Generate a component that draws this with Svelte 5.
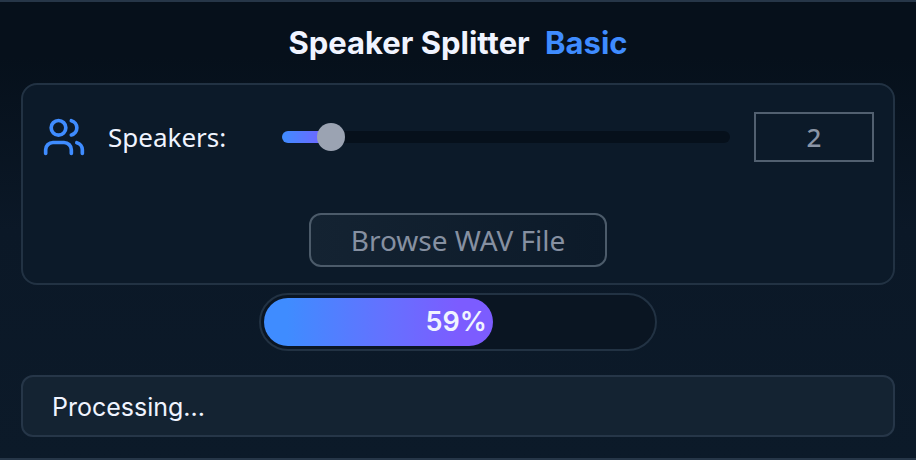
<script lang="ts">
  const minSpeakers = 1;
  const maxSpeakers = 13;

  let speakers = $state(2);
  let progress = $state(59);
  let status = $state('Processing...');
  let busy = $state(true);

  // Share of the track left of the thumb
  const filled = $derived(((speakers - minSpeakers) / (maxSpeakers - minSpeakers)) * 100);
</script>

<main class="app">
  <h1>Speaker Splitter <span class="edition">Basic</span></h1>

  <section class="panel">
    <div class="speakers">
      <svg class="icon" viewBox="0 0 24 24" aria-hidden="true">
        <path d="M16 21v-2a4 4 0 0 0-4-4H6a4 4 0 0 0-4 4v2" />
        <circle cx="9" cy="7" r="4" />
        <path d="M22 21v-2a4 4 0 0 0-3-3.87" />
        <path d="M16 3.13a4 4 0 0 1 0 7.75" />
      </svg>
      <label for="speakers">Speakers:</label>
      <input
        id="speakers"
        class="slider"
        type="range"
        min={minSpeakers}
        max={maxSpeakers}
        bind:value={speakers}
        disabled={busy}
        style="--filled: {filled}%"
      />
      <input
        class="count"
        type="text"
        inputmode="numeric"
        aria-label="Number of speakers"
        bind:value={speakers}
        disabled={busy}
      />
    </div>
    <button class="browse" type="button" disabled={busy}>Browse WAV File</button>
  </section>

  <div
    class="progress"
    role="progressbar"
    aria-label="Progress"
    aria-valuemin="0"
    aria-valuemax="100"
    aria-valuenow={progress}
  >
    <div class="bar" style="width: {progress}%">{progress}%</div>
  </div>

  <p class="status" role="status">{status}</p>
</main>

<style>
  :global(body) {
    margin: 0;
    background: #0c1a29;
  }

  .app {
    box-sizing: border-box;
    min-height: 100vh;
    padding: 21px;
    display: flex;
    flex-direction: column;
    border: solid #263648;
    border-width: 2px 0;
    background: linear-gradient(#06101b 0%, #06101b 12%, #0b1827 50%, #0c1a29 100%);
    color: #f0f4ff;
    font-family: Inter, sans-serif;
  }

  h1 {
    margin: 0 0 20px;
    font-size: 31px;
    line-height: 40px;
    font-weight: 700;
    text-align: center;
  }

  .edition {
    margin-left: 8px;
    color: #3f8cff;
  }

  .panel {
    padding: 27px 19px 16px;
    display: flex;
    flex-direction: column;
    align-items: center;
    gap: 51px;
    border: 2px solid #223243;
    border-radius: 16px;
    background: #0c1a29;
  }

  .speakers {
    width: 100%;
    display: flex;
    align-items: center;
  }

  .icon {
    flex: none;
    width: 44px;
    height: 44px;
    fill: none;
    stroke: #3f8cff;
    stroke-width: 2;
    stroke-linecap: round;
    stroke-linejoin: round;
  }

  label {
    flex: none;
    width: 154px;
    margin: 0 20px 0 22px;
    font: 400 26px "Noto Sans", sans-serif;
  }

  .slider {
    flex: 1;
    min-width: 0;
    height: 28px;
    margin: 0;
    appearance: none;
    background: none;
  }

  .slider::-webkit-slider-runnable-track {
    height: 12px;
    border-radius: 6px;
    background: linear-gradient(90deg, #3f8cff, #7c5cff) 0 0 / calc(14px + var(--filled)) 100% no-repeat, #06101b;
  }

  .slider::-webkit-slider-thumb {
    width: 28px;
    height: 28px;
    margin-top: -8px;
    appearance: none;
    border-radius: 50%;
    background: #9ba3b2;
  }

  .count {
    box-sizing: border-box;
    flex: none;
    width: 120px;
    height: 50px;
    margin-left: 24px;
    padding: 0;
    border: 2px solid #526070;
    border-radius: 0;
    background: transparent;
    color: #8b95a5;
    font: 500 26px "Noto Sans", sans-serif;
    text-align: center;
  }

  .browse {
    box-sizing: border-box;
    height: 54px;
    padding: 0 40px;
    border: 2px solid #4c5b6a;
    border-radius: 12px;
    background: linear-gradient(90deg, #142332, #0c1a29);
    color: #8690a1;
    font: 400 28px "Noto Sans", sans-serif;
  }

  .progress {
    box-sizing: border-box;
    width: 398px;
    max-width: 100%;
    height: 58px;
    margin: 8px auto 24px;
    padding: 3px;
    border: 2px solid #223243;
    border-radius: 29px;
    background: #0a1522;
  }

  .bar {
    box-sizing: border-box;
    height: 48px;
    padding-right: 6px;
    border-radius: 24px;
    background: linear-gradient(90deg, #3f8cff 10%, #6670ff 55%, #7c5cff 85%);
    font-size: 27px;
    line-height: 48px;
    font-weight: 600;
    text-align: right;
  }

  .status {
    margin: 0;
    padding: 14px 29px 12px;
    border: 2px solid #263648;
    border-radius: 12px;
    background: #142332;
    font-size: 25px;
    line-height: 32px;
  }
</style>
